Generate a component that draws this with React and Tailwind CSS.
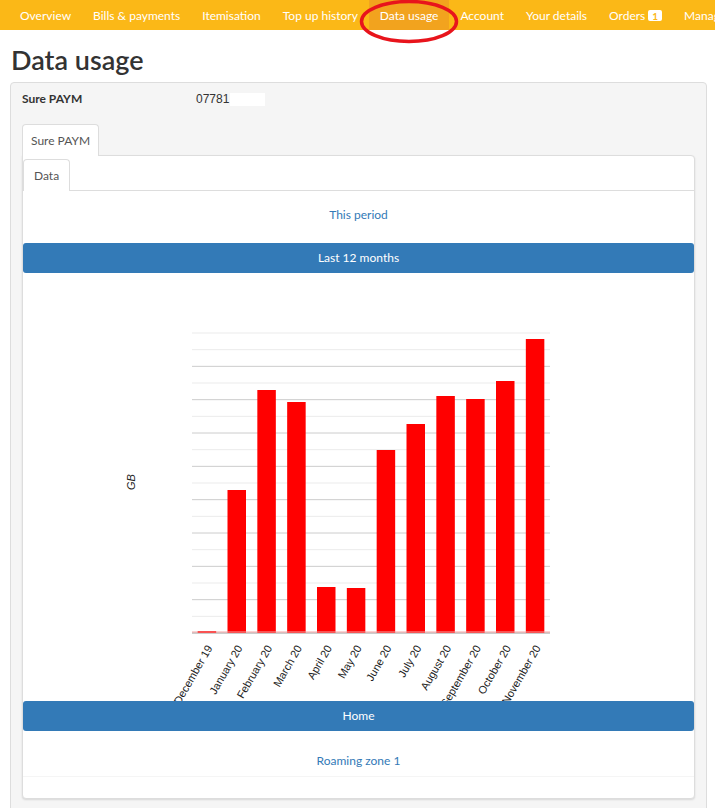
import React from 'react';

const navItems = ['Overview', 'Bills & payments', 'Itemisation', 'Top up history', 'Data usage', 'Account', 'Your details'];

// bar tops measured in page px, baseline at 633
const usage = [
  { month: 'December 19', top: 631 },
  { month: 'January 20', top: 490 },
  { month: 'February 20', top: 390 },
  { month: 'March 20', top: 402 },
  { month: 'April 20', top: 587 },
  { month: 'May 20', top: 588 },
  { month: 'June 20', top: 450 },
  { month: 'July 20', top: 424 },
  { month: 'August 20', top: 396 },
  { month: 'September 20', top: 399 },
  { month: 'October 20', top: 381 },
  { month: 'November 20', top: 339 },
];

function UsageChart() {
  const left = 192;
  const right = 550;
  const base = 633;
  const slot = (right - left) / usage.length;
  const step = 300 / 18;
  const lines = Array.from({ length: 19 }, (_, i) => i);

  return (
    <svg width="672" height="428" viewBox="23 273 672 428" className="block">
      {lines.map(i => {
        const y = base - i * step;
        const major = i % 2 === 0 && i < 18;
        return (
          <line
            key={i}
            x1={left}
            x2={right}
            y1={y}
            y2={y}
            stroke={i === 0 ? '#9a9a9a' : major ? '#cccccc' : '#ebebeb'}
            strokeWidth="1"
          />
        );
      })}
      {usage.map((d, i) => {
        const cx = left + slot * (i + 0.5);
        return (
          <rect key={d.month} x={cx - 9.25} y={d.top} width="18.5" height={base - d.top} fill="#ff0000" />
        );
      })}
      <line x1={left} x2={right} y1={base - 1} y2={base - 1} stroke="#f3a5a5" strokeWidth="1" />
      <text
        x="135"
        y="482"
        transform="rotate(-90 135 482)"
        textAnchor="middle"
        fontSize="11"
        fontStyle="italic"
        fill="#222"
        fontFamily="'Liberation Sans', Arial, sans-serif"
      >
        GB
      </text>
      {usage.map((d, i) => {
        const cx = left + slot * (i + 0.5) + 6;
        const y = 648;
        return (
          <text
            key={d.month}
            x={cx}
            y={y}
            transform={`rotate(-60 ${cx} ${y})`}
            textAnchor="end"
            fontSize="11"
            fill="#222"
            fontFamily="'Liberation Sans', Arial, sans-serif"
          >
            {d.month}
          </text>
        );
      })}
    </svg>
  );
}

export default function App() {
  return (
    <div className="min-h-screen bg-white font-['Lato','Open_Sans',sans-serif] text-[#333]">
      <div className="relative">
        <nav className="flex h-[30px] overflow-hidden whitespace-nowrap bg-[#fbb817] pl-[9px] text-[12px] leading-[31px] text-white">
          {navItems.map(item => (
            <a key={item} className={`shrink-0 px-[11px] ${item === 'Data usage' ? 'bg-[#f2a31e]' : ''}`}>
              {item}
            </a>
          ))}
          <a className="flex shrink-0 items-center px-[11px] pt-px">
            Orders
            <span className="ml-[3px] flex h-[11px] items-center rounded-[2px] bg-white px-[4px] text-[10px] font-bold leading-none text-[#fbb817]">
              1
            </span>
          </a>
          <a className="shrink-0 px-[11px]">Manage</a>
        </nav>
        {/* red annotation ring drawn over the menu */}
        <svg className="pointer-events-none absolute left-[359px] top-0 z-10" width="100" height="45" viewBox="0 0 100 45">
          <ellipse cx="50" cy="21.5" rx="47.5" ry="20" fill="none" stroke="#e8141c" strokeWidth="3.5" />
        </svg>
      </div>

      <h1 className="ml-[11px] mt-[14px] text-[27px] font-semibold leading-[32px] text-[#333]">Data usage</h1>

      <div className="ml-[10px] mr-[8px] mt-[6px] rounded-t-[4px] border border-[#dddddd] bg-[#f5f5f5] px-[11px] pt-[9px]">
        <div className="flex h-[14px] items-center text-[12px]">
          <span className="w-[174px] font-bold">Sure PAYM</span>
          <span className="font-['Liberation_Sans',Arial,sans-serif]">07781</span>
          <span className="ml-px h-[13px] w-[35px] bg-white" />
        </div>

        <div className="mt-[18px] flex">
          <div className="-mb-px rounded-t-[4px] border border-b-0 border-[#dddddd] bg-white px-[8px] text-[12px] leading-[31px] text-[#555]">
            Sure PAYM
          </div>
        </div>

        <div className="rounded-b-[4px] rounded-tr-[4px] border border-[#dddddd] bg-white shadow-[0_1px_2px_rgba(0,0,0,0.12)]">
          <div className="flex border-b border-[#dddddd] pt-[3px]">
            <div className="-mb-px rounded-t-[4px] border border-b-0 border-[#dddddd] bg-white px-[10px] text-[12px] leading-[31px] text-[#555]">
              Data
            </div>
          </div>

          <div className="flex h-[52px] items-center justify-center pb-[4px] text-[12px] text-[#337ab7]">This period</div>

          <div className="flex h-[30px] items-center justify-center rounded-[3px] bg-[#337ab7] text-[12px] text-white">
            Last 12 months
          </div>

          <UsageChart />

          <div className="flex h-[30px] items-center justify-center rounded-[3px] bg-[#337ab7] text-[12px] text-white">
            Home
          </div>

          <div className="flex h-[45px] items-end justify-center pb-[6px] text-[12px] text-[#337ab7]">Roaming zone 1</div>
          <div className="h-[22px] border-t border-[#f5f5f5]" />
        </div>
        <div className="h-[20px]" />
      </div>
    </div>
  );
}
